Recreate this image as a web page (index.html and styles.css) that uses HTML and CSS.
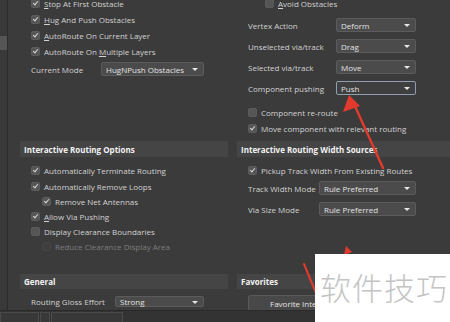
FILE: index.html
```html
<!DOCTYPE html>
<html lang="en">
<head>
  <meta charset="UTF-8">
  <title>PCB Editor - Interactive Routing</title>
  <link rel="stylesheet" href="styles.css">
</head>
<body>
  <div class="app">
    <!-- collapsed side panel -->
    <aside class="side"><div class="side-tab"></div></aside>

    <main class="main">
      <!-- Routing conflict resolution / dragging -->
      <section class="block top">
        <div class="col">
          <div class="check on"><span class="box"></span><span><u>S</u>top At First Obstacle</span></div>
          <div class="check on"><span class="box"></span><span><u>H</u>ug And Push Obstacles</span></div>
          <div class="check on"><span class="box"></span><span><u>A</u>utoRoute On Current Layer</span></div>
          <div class="check on"><span class="box"></span><span>AutoRoute On <u>M</u>ultiple Layers</span></div>
          <div class="field mode">
            <span class="lbl">Current Mode</span>
            <div class="select">HugNPush Obstacles</div>
          </div>
        </div>
        <div class="col">
          <div class="check sub"><span class="box"></span><span><u>A</u>void Obstacles</span></div>
          <div class="field drag"><span class="lbl">Vertex Action</span><div class="select">Deform</div></div>
          <div class="field drag"><span class="lbl">Unselected via/track</span><div class="select">Drag</div></div>
          <div class="field drag"><span class="lbl">Selected via/track</span><div class="select">Move</div></div>
          <div class="field drag"><span class="lbl">Component pushing</span><div class="select focus">Push</div></div>
          <div class="check gap"><span class="box"></span><span>Component re-route</span></div>
          <div class="check on"><span class="box"></span><span>Move component with relevant routing</span></div>
        </div>
      </section>

      <!-- Options / width sources -->
      <section class="block opts">
        <h3 class="head">Interactive Routing Options</h3>
        <h3 class="head">Interactive Routing Width Sources</h3>
        <div class="col list">
          <div class="check on tall"><span class="box"></span><span>Automatically Terminate Routing</span></div>
          <div class="check on tall"><span class="box"></span><span>Automatically Remove Loops</span></div>
          <div class="check on indent"><span class="box"></span><span>Remove Net Antennas</span></div>
          <div class="check on"><span class="box"></span><span><u>A</u>llow Via Pushing</span></div>
          <div class="check"><span class="box"></span><span>Display Clearance Boundaries</span></div>
          <div class="check indent disabled"><span class="box"></span><span>Reduce Clearance Display Area</span></div>
        </div>
        <div class="col list">
          <div class="check on tall"><span class="box"></span><span>Pickup Track Width From Existing Routes</span></div>
          <div class="field width"><span class="lbl">Track Width Mode</span><div class="select">Rule Preferred</div></div>
          <div class="field width"><span class="lbl">Via Size Mode</span><div class="select">Rule Preferred</div></div>
        </div>
      </section>

      <!-- General / favorites -->
      <section class="block general">
        <h3 class="head">General</h3>
        <h3 class="head">Favorites</h3>
        <div class="col">
          <div class="field gloss"><span class="lbl">Routing Gloss Effort</span><div class="select">Strong</div></div>
        </div>
        <div class="col">
          <button class="fav">Favorite Interactive Routing Widths</button>
        </div>
      </section>
    </main>

    <footer class="statusbar">
      <span class="tab"></span>
      <span class="tab small"></span>
      <span class="tab wide"></span>
    </footer>

    <!-- annotation arrows drawn over the screenshot -->
    <svg class="arrows" width="450" height="322" viewBox="0 0 450 322">
      <path d="M383 168 L354 104" stroke="#e23a2c" stroke-width="2.4" stroke-linecap="round"/>
      <path d="M349 95 L343 112 L360 106 Z" fill="#e23a2c"/>
      <path d="M304 264 L318 298" stroke="#e23a2c" stroke-width="2" stroke-linecap="round"/>
      <path d="M346 246 L344 255 L352 252 Z" fill="#e23a2c"/>
    </svg>

    <div class="watermark">软件技巧</div>
  </div>
</body>
</html>
```

FILE: styles.css
```css
body {
  margin: 0;
  background: #3b3b3b;
  font-family: "Open Sans", "Noto Sans", sans-serif;
  font-size: 8px;
  color: #d2d2d2;
  overflow: hidden;
}
.app {
  position: relative;
  width: 450px;
  height: 322px;
  display: grid;
  grid-template-columns: 8px 1fr;
  grid-template-rows: 310px 12px;
  overflow: hidden;
}
.side {
  background: #393939;
  border-right: 1px solid #2c2c2c;
  padding-top: 36px;
}
.side-tab {
  height: 14px;
  background: #555;
}
.main {
  padding-left: 12px;
  overflow: hidden;
}
.block {
  display: grid;
  grid-template-columns: 208px 213px;
  column-gap: 9px;
}
.top {
  height: 146px;
  margin-top: -5px;
  align-items: start;
}
.opts {
  height: 133px;
  grid-template-rows: 16px 1fr;
}
.general {
  grid-template-rows: 15px 1fr;
}
.head {
  margin: 0;
  background: #454545;
  color: #f2f2f2;
  font-size: 8px;
  font-weight: bold;
  padding-left: 4px;
  display: flex;
  align-items: center;
}
.opts .head:first-child,
.general .head:first-child {
  margin-right: 0;
}
.col {
  display: flex;
  flex-direction: column;
  padding-left: 11px;
}
.col + .col {
  padding-left: 11px;
}

/* checkboxes */
.check {
  height: 16px;
  display: flex;
  align-items: center;
  gap: 4px;
  white-space: nowrap;
}
.list .check {
  height: 15px;
}
.list .check.tall {
  height: 16px;
}
.list {
  padding-top: 5px;
}
.box {
  width: 9px;
  height: 9px;
  background: #555;
  border: 1px solid #5d5d5d;
  border-radius: 2px;
  box-sizing: border-box;
  position: relative;
  flex: none;
}
.check.on .box::after {
  content: "";
  position: absolute;
  left: 2px;
  top: 0px;
  width: 2px;
  height: 4px;
  border-right: 1px solid #d8d8d8;
  border-bottom: 1px solid #d8d8d8;
  transform: rotate(40deg);
}
.check.sub {
  padding-left: 17px;
}
.check.indent {
  padding-left: 11px;
}
.check.gap {
  margin-top: 9px;
}
.check.disabled {
  color: #7d7d7d;
}
.check.disabled .box {
  background: #3f3f3f;
  border-color: #444;
}

/* label + dropdown rows */
.field {
  display: flex;
  align-items: center;
  white-space: nowrap;
}
.lbl {
  flex: none;
}
.select {
  position: relative;
  background: #4b4b4b;
  border: 1px solid #5c5c5c;
  border-radius: 2px;
  box-sizing: border-box;
  color: #e2e2e2;
  padding-left: 4px;
  display: flex;
  align-items: center;
}
.select::after {
  content: "";
  position: absolute;
  right: 5px;
  top: 50%;
  margin-top: -1px;
  border-left: 3px solid transparent;
  border-right: 3px solid transparent;
  border-top: 3px solid #e8e8e8;
}
.select.focus {
  background: #3f3f3f;
  border-color: #8ea0b0;
  height: 15px;
}
.mode {
  margin-top: 3px;
  height: 14px;
}
.mode .lbl {
  width: 70px;
}
.mode .select {
  width: 103px;
  height: 14px;
}
.drag {
  margin-top: 7px;
  height: 14px;
}
.drag:first-of-type {
  margin-top: 6px;
}
.drag .lbl {
  width: 88px;
}
.drag .select {
  width: 80px;
  height: 14px;
}
.width {
  margin-top: 3px;
  height: 14px;
}
.width + .width {
  margin-top: 7px;
}
.width .lbl {
  width: 71px;
}
.width .select {
  width: 97px;
  height: 14px;
}
.gloss {
  margin-top: 7px;
  height: 11px;
}
.gloss .lbl {
  width: 84px;
}
.gloss .select {
  width: 89px;
  height: 11px;
}
.fav {
  margin-top: 6px;
  width: 150px;
  height: 16px;
  background: #484848;
  border: 1px solid #5a5a5a;
  border-bottom: none;
  border-radius: 3px 3px 0 0;
  color: #e6e6e6;
  font-family: inherit;
  font-size: 8px;
  padding: 0 0 0 21px;
  text-align: left;
  white-space: nowrap;
  overflow: hidden;
}

/* bottom tab strip */
.statusbar {
  grid-column: 1 / 3;
  background: #333;
  border-top: 1px solid #2a2a2a;
  display: flex;
  align-items: flex-end;
  gap: 1px;
}
.tab {
  height: 9px;
  width: 37px;
  border: 1px solid #4a4a4a;
  border-bottom: none;
  background: #383838;
}
.tab.small {
  width: 8px;
}
.tab.wide {
  width: 70px;
}

/* overlays */
.arrows {
  position: absolute;
  left: 0;
  top: 0;
  pointer-events: none;
}
.watermark {
  position: absolute;
  left: 315px;
  top: 254px;
  width: 135px;
  height: 68px;
  background: #fff;
  color: #c4c4c4;
  font-family: "Noto Sans CJK SC", sans-serif;
  font-size: 31px;
  font-weight: 300;
  letter-spacing: 1px;
  padding: 10px 0 0 5px;
  box-sizing: border-box;
  white-space: nowrap;
}
```
